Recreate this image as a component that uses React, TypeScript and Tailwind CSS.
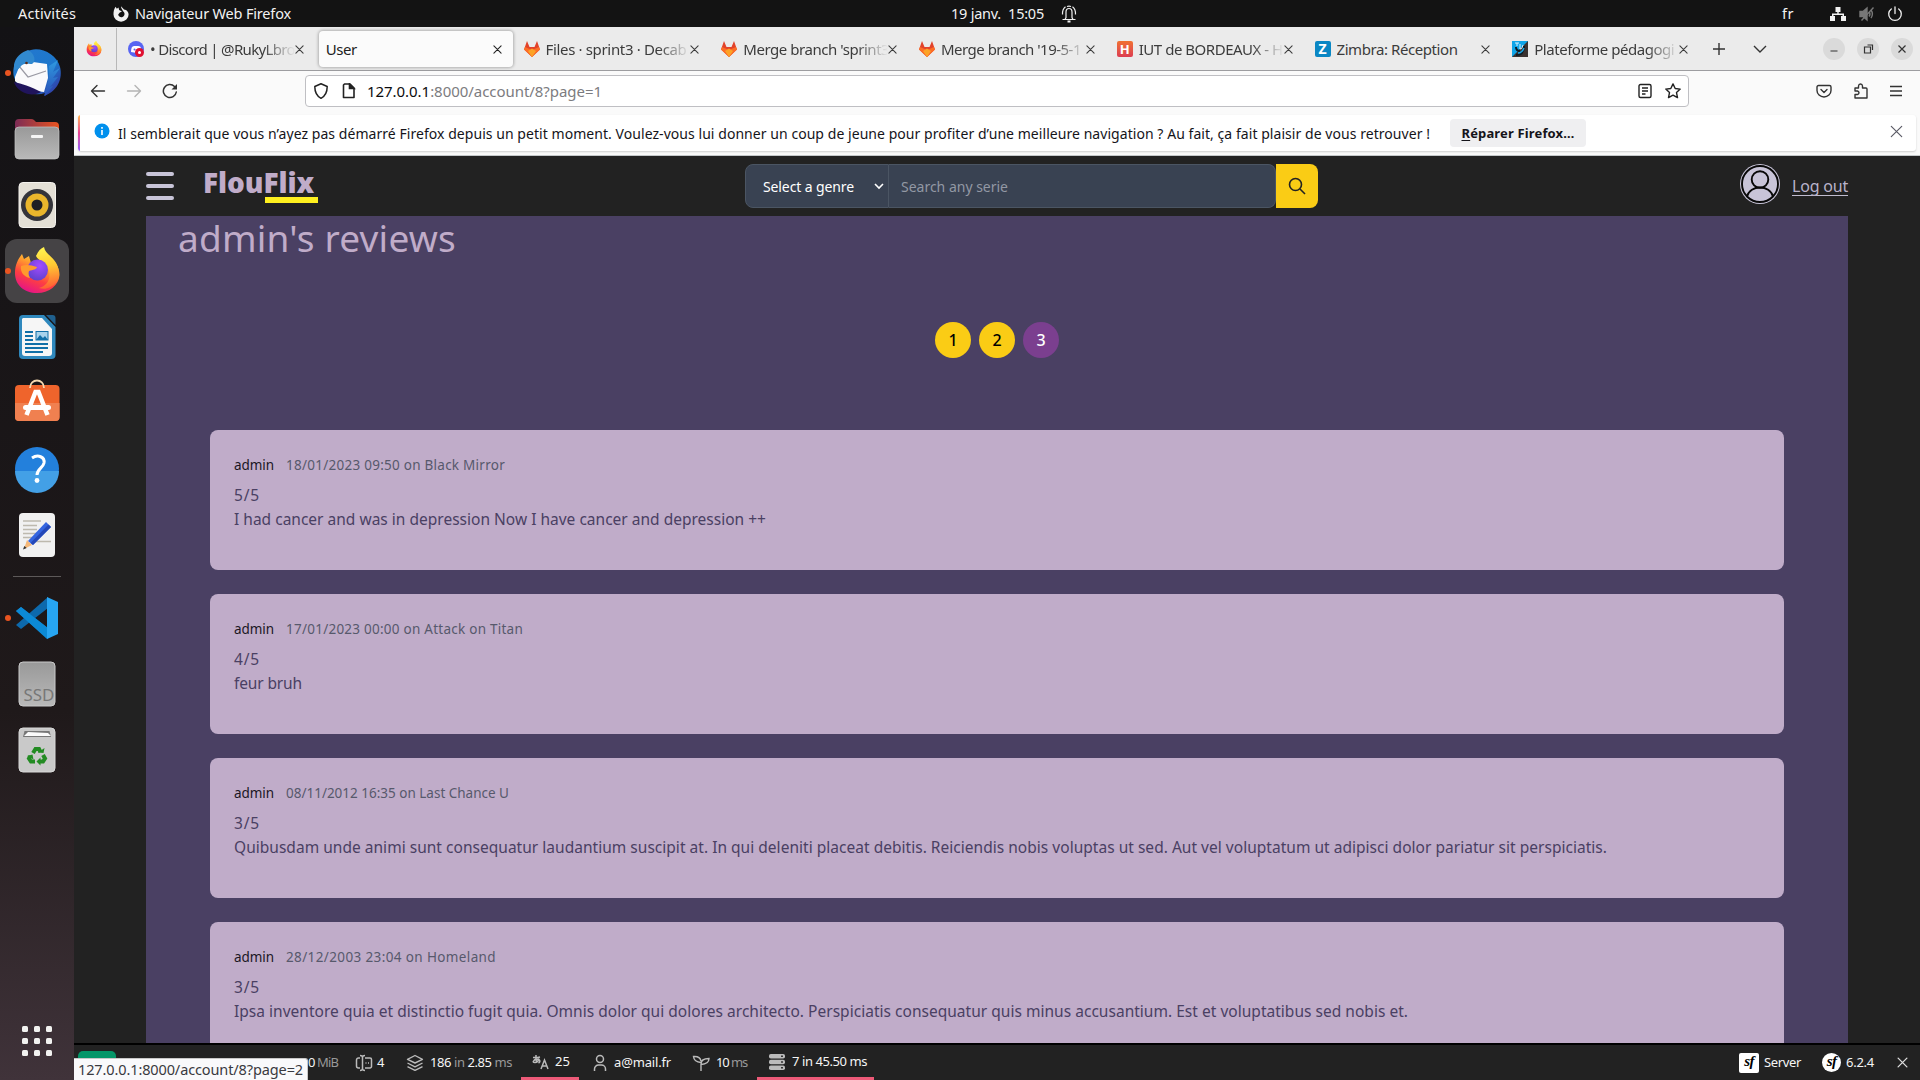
import React, { useLayoutEffect, useRef } from "react";
import type { ReactNode } from "react";

/** One line of text whose tracking is adjusted so that it fills `w` pixels. */
function Fit({ w, className = "", children }: { w: number; className?: string; children: ReactNode }) {
  const ref = useRef<HTMLSpanElement>(null);
  useLayoutEffect(() => {
    const el = ref.current;
    if (!el) return;
    el.style.letterSpacing = "0px";
    const n = (el.textContent || "").length;
    const natural = el.getBoundingClientRect().width;
    el.style.letterSpacing = `${(w - natural) / n}px`;
  }, [w]);
  return (
    <span ref={ref} className={`inline-block shrink-0 whitespace-pre ${className}`}>
      {children}
    </span>
  );
}

function Cross({ className = "size-2.5", width = 1.2 }: { className?: string; width?: number }) {
  return (
    <svg viewBox="0 0 10 10" className={`shrink-0 overflow-visible ${className}`} fill="none" stroke="currentColor" strokeWidth={width} strokeLinecap="round">
      <path d="M1 1l8 8M9 1L1 9" />
    </svg>
  );
}

function TopBar() {
  return (
    <div className="grid h-[27px] shrink-0 grid-cols-[951px_1fr_auto] items-center bg-[#131313] text-[14.5px] leading-none text-[#f2f2f2]">
      <div className="flex items-center pl-[18px]">
        <Fit w={58}>Activités</Fit>
        <svg viewBox="0 0 16 17" className="ml-[37px] mr-[6px] h-[17px] w-4">
          <path d="M8 1.2l3 3.2C13.800 4.600 15.600 7 15.600 9.500A7.500 7.200 0 0 1 .5 9.500C.5 6.500 1 4 2.600 1.800l1.200 2L5.500 2.500l.6 2.400L9 6.400 6.800 7.500 5.200 9.500 C5.600 12 8 12.700 9.500 12 12.300 10.500 12 7.500 10 6.200 9.500 4.500 8 3.500 8 1.200z" fill="#f2f2f2" />
        </svg>
        <Fit w={156}>Navigateur Web Firefox</Fit>
      </div>
      <div className="flex items-center">
        <Fit w={93}>19 janv.  15:05</Fit>
        <svg viewBox="0 0 16 18" className="ml-[17px] h-[18px] w-4" fill="none" stroke="#f2f2f2" strokeWidth="1.2">
          <path d="M1.500 14.500h13M4 14.500l1-2V7a3 3.500 0 0 1 6 0v5.500l1 2M1.500 9.500Q1.300 4 4.500 1.800M14.500 9.500Q14.700 4 11.500 1.800" />
          <path d="M6.500 16.500h3" strokeWidth="2" />
          <path d="M6 1.500q2-.8 4 0" />
        </svg>
      </div>
      <div className="flex items-center pr-[17px]">
        <Fit w={12}>fr</Fit>
        <svg viewBox="0 0 16 14" className="ml-[36px] h-[14px] w-4" fill="#f2f2f2">
          <path d="M5.500 0h5v5H8.700v1.500H14V9h2v5h-5V9h1.500V8h-9v1H5v5H0V9h2V6.500h5.300V5H5.500z" />
        </svg>
        <svg viewBox="0 0 16 16" className="ml-[13px] size-4" fill="none" stroke="#777" strokeWidth="1.4">
          <path d="M1 5.500h3l4-3.500v12l-4-3.500H1z" fill="#777" />
          <path d="M10 5.500a4 4 0 0 1 0 5M12 4a7 7 0 0 1 0 8M14.500 1.500l-12 13" />
        </svg>
        <svg viewBox="0 0 16 16" className="ml-[12px] size-4" fill="none" stroke="#f2f2f2" strokeWidth="1.3" strokeLinecap="round">
          <path d="M4.300 3A6.300 6.300 0 1 0 11.700 3M8 1v6.500" />
        </svg>
      </div>
    </div>
  );
}

function FirefoxArt() {
  return (
    <>
      <defs>
        <linearGradient id="fxBody" x1="0.8" y1="0" x2="0.3" y2="1">
          <stop offset="0" stopColor="#fff44f" />
          <stop offset="0.35" stopColor="#ffa02e" />
          <stop offset="0.65" stopColor="#ff4040" />
          <stop offset="1" stopColor="#e3128a" />
        </linearGradient>
        <radialGradient id="fxCore" cx="0.6" cy="0.3" r="0.8">
          <stop offset="0" stopColor="#a34bff" />
          <stop offset="1" stopColor="#5940c8" />
        </radialGradient>
        <linearGradient id="fxTail" x1="0.5" y1="0" x2="0.6" y2="1">
          <stop offset="0" stopColor="#fff44f" />
          <stop offset="0.45" stopColor="#ffc933" />
          <stop offset="1" stopColor="#ff5a34" />
        </linearGradient>
      </defs>
      <path d="M10 34C10 26 13 20 17 15l2 5 5-3 2 7 8 0c4-4 9-6 14-3 4 4 6.500 9 6.500 15A22 19 0 0 1 32 54 C19 54 10 46 10 34z" fill="url(#fxBody)" />
      <path d="M31 17C33 12 36 9 39 8c1 6 6 8 10 13 6 7 6 16 2 22-4 6-11 8-17 6 8-2 12-9 10-17-2-8-11-10-13-15z" fill="url(#fxTail)" />
      <circle cx="32.500" cy="31" r="10.500" fill="url(#fxCore)" />
      <path d="M16 27c5-2 10-1 16 1 0 2-4 3-8 4-1 3 0 5 1 7-6-1-10-6-9-12z" fill="#ff9a2e" />
    </>
  );
}

function DockIcon({ children, running = false, active = false, className = "" }: { children: ReactNode; running?: boolean; active?: boolean; className?: string }) {
  return (
    <div className={`relative ml-[5px] size-16 shrink-0 rounded-[12px] ${active ? "bg-[#454345]" : ""} ${className}`}>
      <svg viewBox="0 0 64 64" className="size-16">{children}</svg>
      {running && <i className="absolute top-[29px] left-0 size-1.5 rounded-full bg-[#e95420]" />}
    </div>
  );
}

function Dock() {
  return (
    <div className="flex w-[74px] shrink-0 flex-col bg-linear-to-b from-[#131215] via-[#1f191a] via-65% to-[#40333a] pt-[14px]">
      <div className="flex flex-col gap-0.5">
        <DockIcon running>
          <defs>
            <linearGradient id="tb" x1="0" y1="0" x2="1" y2="1"><stop offset="0" stopColor="#2478cf" /><stop offset="0.6" stopColor="#1d77cc" /><stop offset="1" stopColor="#3a2a9b" /></linearGradient>
            <linearGradient id="tbWing" x1="0" y1="0" x2="0" y2="1"><stop offset="0" stopColor="#2f9be0" /><stop offset="1" stopColor="#2a4fb8" /></linearGradient>
          </defs>
          <path d="M9 36C6 22 15 11 26 9c11-3 26 5 29 17 3 11-2 24-16 29l1-3c-12 4-27-2-31-16z" fill="url(#tb)" />
          <path d="M10 36l5-12 13-3 14 2 1 14-4 14C28 50 14 45 10 40z" fill="#fafafc" />
          <path d="M14 25l9 11 18-6" fill="none" stroke="#9a9aa4" strokeWidth="1.200" />
          <path d="M9 41c8 2 16 4 27 10-3 2-8 3-13 2-7-2-12-6-14-12z" fill="#20145c" />
          <path d="M9 24c1-8 8-13 14-15 6 3 9 11 4 14-5 0-7-2-11 2-2 3-4 4-7 4z" fill="#3189cf" />
          <path d="M44 25l9-6-5 12 7-4-7 10 5-1-8 10 3-1-8 10c-1-6 5-12 4-30z" fill="url(#tbWing)" />
          <circle cx="21.500" cy="22" r="1.300" fill="#5b2b18" />
        </DockIcon>
        <DockIcon>
          <defs>
            <linearGradient id="fo" x1="0" y1="0" x2="1" y2="0"><stop offset="0" stopColor="#7c2b55" /><stop offset="1" stopColor="#e95420" /></linearGradient>
            <linearGradient id="gr" x1="0" y1="0" x2="0" y2="1"><stop offset="0" stopColor="#999" /><stop offset="1" stopColor="#b9b9b9" /></linearGradient>
          </defs>
          <path d="M10 26V16a4 4 0 0 1 4-4h12q2 0 3 1l2 2h19a4 4 0 0 1 4 4v10z" fill="url(#fo)" />
          <rect x="10" y="20" width="44" height="32" rx="4" fill="url(#gr)" stroke="#c5c5c5" strokeWidth="0.700" />
          <rect x="26" y="28" width="12" height="3" rx="1" fill="#f5f5f5" />
        </DockIcon>
        <DockIcon>
          <rect x="14" y="9.500" width="36.500" height="45" rx="4" fill="#e4e0d6" stroke="#f4f2ee" />
          <circle cx="32" cy="32" r="16" fill="#34343a" />
          <circle cx="32" cy="32" r="11.500" fill="#eab62c" />
          <circle cx="32" cy="32" r="5.500" fill="#202024" />
        </DockIcon>
        <DockIcon running active><FirefoxArt /></DockIcon>
        <DockIcon>
          <path d="M18 10h21l11.500 12v28a4 4 0 0 1-4 4H18a4 4 0 0 1-4-4V14a4 4 0 0 1 4-4z" fill="#2f88bd" />
          <path d="M18 13h19l10 11v24a3 3 0 0 1-3 3H20a3 3 0 0 1-3-3V14z" fill="#f6f6f6" />
          <path d="M41 10h6.500a3 3 0 0 1 3 3v7z" fill="#20608e" />
          <path d="M20 27h8M20 31h8M20 35h8M20 39h23M20 43h23M20 47h18" stroke="#1170a8" strokeWidth="2" />
          <rect x="31" y="26.500" width="12" height="8.500" fill="#a8d3ec" stroke="#1170a8" />
          <path d="M31 35l4-5 3 3 2-2 3 4z" fill="#1170a8" />
        </DockIcon>
        <DockIcon>
          <rect x="10" y="14" width="44.500" height="36" rx="4" fill="#ef642c" />
          <path d="M10 32h44.500v14a4 4 0 0 1-4 4h-36.500a4 4 0 0 1-4-4z" fill="#f08050" />
          <path d="M25 17c0-10 14-10 14 0" fill="none" stroke="#f4d8b0" strokeWidth="1.800" />
          <path d="M21.500 44l9-23h3l9 23" fill="none" stroke="#fff" strokeWidth="4.500" />
          <rect x="18" y="34" width="28" height="5" rx="2.500" fill="#fff" />
        </DockIcon>
        <DockIcon>
          <circle cx="32" cy="32" r="22" fill="#2380dc" />
          <path d="M10 34a22 22 0 0 0 44 0z" fill="#43a0e6" />
          <path d="M27 21c6-4 13-1 12 5-1 5-7 6-7 12" fill="none" stroke="#fff" strokeWidth="3" />
          <circle cx="32" cy="43.500" r="2.400" fill="#fff" />
        </DockIcon>
        <DockIcon>
          <rect x="14" y="10" width="36" height="44" rx="4" fill="#f1f1f1" />
          <path d="M18 18h18M18 22.500h14M18 26.500h14M18 30.500h14M18 34.500h12M26 38.500h20" stroke="#bdb9ae" strokeWidth="1.600" />
          <path d="M19 46l3-9 5 5z" fill="#f5b878" /><path d="M18 46.500l1.300-3.500 2.400 2z" fill="#333" />
          <path d="M23 38l18-19 5 5-18 18z" fill="#3465e0" />
          <path d="M25.500 40l18-18.500 2.500 2.500-18 18z" fill="#2448b8" />
        </DockIcon>
      </div>
      <div className="my-[9px] ml-[13px] h-px w-12 bg-[#5d5959]" />
      <div className="flex flex-col gap-0.5">
        <DockIcon running>
          <path d="M11 25l5-4 27 21v11z" fill="#1176bd" />
          <path d="M11 39l5 4 27-21V11z" fill="#0d69ac" />
          <path d="M11 25l5-4 28 22-2 10z" fill="#0c8ad6" />
          <path d="M42 11l11 5v32l-11 5z" fill="#27a5f2" />
        </DockIcon>
        <DockIcon>
          <rect x="14" y="10" width="36" height="44" rx="4" fill="url(#gr)" stroke="#c9c9c9" />
          <text x="18.500" y="48.500" fontSize="15.500" textLength="31" lengthAdjust="spacingAndGlyphs" fill="#777" className="font-['Noto_Sans',sans-serif]">SSD</text>
        </DockIcon>
        <DockIcon>
          <rect x="14" y="10" width="36" height="44" rx="4" fill="#c9c9c9" stroke="#d8d8d8" />
          <path d="M18 19l1.500-6h25l1.500 6z" fill="#777" />
          <path d="M19 18l4-4 20 1 3 3z" fill="#fafafa" />
          <g fill="none" stroke="#228b22" strokeWidth="4">
            <path d="M28 35l2.500-4h3.500l1.500 3M38 37l2 3.500-2 3h-3M30 43.500h-4l-2-3 1.500-2.500" />
          </g>
          <path d="M33 34.500l5.500.5 1-5zM35.500 39.500v8l-4-4zM22 38l5.500-1.500 1 5z" fill="#228b22" />
        </DockIcon>
      </div>
      <DockIcon className="mt-auto mb-[7px]">
        {[17, 29, 41].map((y) => [17, 29, 41].map((x) => <rect key={`${x}-${y}`} x={x} y={y} width="6" height="6" rx="1.500" fill="#f2f2f0" />))}
      </DockIcon>
    </div>
  );
}

function GitlabIcon() {
  return (
    <svg viewBox="0 0 16 16" className="size-4">
      <path d="M3 0l2.500 6h5L13 0l3 8.500L8 16 0 8.500z" fill="#e2432a" />
      <path d="M0 8.500L1 6l7 3 7-3 1 2.500L8 16z" fill="#fc6d26" />
      <path d="M4 10l4-2.500L12 10l-4 6z" fill="#fca326" />
    </svg>
  );
}

const favicons: Record<string, ReactNode> = {
  discord: (
    <svg viewBox="0 0 16 16" className="size-4">
      <circle cx="8" cy="8" r="8" fill="#5865f2" />
      <path d="M3 11c0-4 1-6 3-6h4c2 0 3 1 3 3l-2 1H9v3z" fill="#fff" />
      <circle cx="6.500" cy="8.500" r="1" fill="#5865f2" />
      <circle cx="11.500" cy="11.500" r="4.500" fill="#e01030" />
      <circle cx="11.500" cy="11.500" r="1.500" fill="#fff" />
    </svg>
  ),
  gitlab: <GitlabIcon />,
  hp: <span className="flex size-4 items-center justify-center rounded-[2px] bg-linear-to-b from-[#f07030] to-[#dc3c50] text-[13px] leading-none font-bold text-white">H</span>,
  zimbra: <span className="flex size-4 items-center justify-center rounded-[2px] bg-[#0a87c4] text-[14px] leading-none font-bold text-white">Z</span>,
  moodle: (
    <svg viewBox="0 0 16 16" className="size-4">
      <path d="M0 0h16v16H0z" fill="#10a5e8" /><path d="M16 0v16H0z" fill="#3b3230" />
      <path d="M4 6q0 4 4 4M4 14q8 0 8-9" fill="none" stroke="#0d1c26" strokeWidth="2" />
      <path d="M3 2h4M5 2v3M8 3v5q2 1 3-4" fill="none" stroke="#d9f2ff" strokeWidth="1" />
      <path d="M6 12q4 0 6-5" fill="none" stroke="#18a9ea" strokeWidth="1.500" />
    </svg>
  ),
};

const tabs = [
  { icon: "discord", text: "• Discord | @RukyLbro", w: 145 },
  { icon: "", text: "User", w: 31 },
  { icon: "gitlab", text: "Files · sprint3 · Decab", w: 141 },
  { icon: "gitlab", text: "Merge branch 'sprint3", w: 146 },
  { icon: "gitlab", text: "Merge branch '19-5-1", w: 140 },
  { icon: "hp", text: "IUT de BORDEAUX - H", w: 144 },
  { icon: "zimbra", text: "Zimbra: Réception", w: 121 },
  { icon: "moodle", text: "Plateforme pédagogi", w: 140 },
];

function TabBar() {
  return (
    <div className="flex h-[44px] shrink-0 items-center border-b border-[#9d9da0] bg-[#ebebeb] pt-px text-[15px] text-[#3c3c3c]">
      <div className="flex h-full w-[43px] items-center border-r border-[#b8b8b8] pl-3">
        <svg viewBox="8 8 48 48" className="size-4"><FirefoxArt /></svg>
      </div>
      <div className="flex w-[1585px] pl-[3px]">
        {tabs.map((t) => {
          const selected = !t.icon;
          const long = t.w > 130;
          return (
            <div
              key={t.text}
              className={`flex h-9 w-[197.75px] shrink-0 items-center pr-[14px] ${selected ? "pl-px" : "pl-[8px]"}`}
            >
              <div className={`flex h-9 items-center ${selected ? "-mr-2.5 w-[194px] shrink-0 rounded-[4px] bg-[#fbfbfb] pr-[11px] pl-[7px] text-[#222] shadow-[0_0_3px_1px_rgba(0,0,0,0.25)]" : "w-full"}`}>
                {t.icon && <span className="mr-1.5 flex size-4 shrink-0">{favicons[t.icon]}</span>}
                <span className={`min-w-0 flex-1 overflow-hidden leading-6 whitespace-nowrap ${long ? "[mask-image:linear-gradient(to_right,black_78%,transparent_100%)]" : ""}`}>
                  <Fit w={t.w}>{t.text}</Fit>
                </span>
                <Cross className="size-[9px]" />
              </div>
            </div>
          );
        })}
      </div>
      <svg viewBox="0 0 12 12" className="ml-[11px] size-3" stroke="#333" strokeWidth="1.400"><path d="M0 6h12M6 0v12" /></svg>
      <svg viewBox="0 0 14 8" className="ml-[28px] h-2 w-[14px]" fill="none" stroke="#333" strokeWidth="1.400"><path d="M1 1l6 6 6-6" /></svg>
      <div className="ml-auto flex gap-3 pr-[7px]">
        {["M7.500 13h7", "M7.500 9h6v6h-6zM10.500 7h5v5", "M7.500 7.500l7 7M14.500 7.500l-7 7"].map((d) => (
          <svg key={d} viewBox="0 0 22 22" className="size-[22px] rounded-full bg-[#dadada]" fill="none" stroke="#333" strokeWidth="1.200"><path d={d} /></svg>
        ))}
      </div>
    </div>
  );
}

function NavBar() {
  return (
    <div className="flex h-[44px] shrink-0 items-center bg-[#fafafa] pb-1 text-[#222]">
      <div className="flex w-[231px] items-center gap-5 pl-4">
        <svg viewBox="0 0 16 16" className="size-4" fill="none" stroke="#333" strokeWidth="1.400" strokeLinecap="round" strokeLinejoin="round"><path d="M14.500 8H1.500M7 2.500l-5.500 5.500 5.500 5.500" /></svg>
        <svg viewBox="0 0 16 16" className="size-4" fill="none" stroke="#b4b4b4" strokeWidth="1.400" strokeLinecap="round" strokeLinejoin="round"><path d="M1.500 8h13M9 2.500l5.500 5.500-5.500 5.500" /></svg>
        <svg viewBox="0 0 16 16" className="size-4" fill="none" stroke="#333" strokeWidth="1.500" strokeLinecap="round"><path d="M14.300 9A6.500 6.500 0 1 1 12.500 3.500" /><path d="M15 1v5.500H9.500z" fill="#333" stroke="none" /></svg>
      </div>
      <div className="flex h-8 w-[1384px] items-center rounded-[4px] border border-[#bfbfc3] bg-white pr-[7px] pl-[7px]">
        <svg viewBox="0 0 16 16" className="size-4" fill="none" stroke="#222" strokeWidth="1.500"><path d="M8 .8l6.200 2.700C14.200 9 12.500 13 8 15.300 3.500 13 1.800 9 1.800 3.500z" strokeLinejoin="round" /></svg>
        <svg viewBox="0 0 16 16" className="ml-3 size-4" fill="none" stroke="#222" strokeWidth="1.600"><path d="M3.500 1h5.500l4 4v9.500H2.500V2z" strokeLinejoin="round" /><path d="M8.500 1v4.500H13z" fill="#222" /></svg>
        <Fit w={235} className="ml-[10px] text-[15px] leading-6 text-[#7c7c80]"><span className="text-[#0c0c0d]">127.0.0.1</span>:8000/account/8?page=1</Fit>
        <svg viewBox="0 0 16 16" className="ml-auto size-4" fill="none" stroke="#222" strokeWidth="1.400"><rect x="2" y="1.500" width="12" height="13" rx="1.500" /><path d="M5 5h6M5 8h6M5 11h3.500" /></svg>
        <svg viewBox="0 0 16 16" className="ml-3 size-4" fill="none" stroke="#222" strokeWidth="1.400" strokeLinejoin="round"><path d="M8 .9l2.200 4.600 5 .6-3.700 3.500 1 5L8 12.100l-4.500 2.500 1-5L.8 6.100l5-.6z" /></svg>
      </div>
      <div className="ml-auto flex items-center gap-5 pr-4">
        <svg viewBox="0 0 16 16" className="size-4" fill="none" stroke="#333" strokeWidth="1.400" strokeLinecap="round" strokeLinejoin="round"><path d="M2.500 2.500h11a1.500 1.500 0 0 1 1.500 1.500v3.500a7 6.500 0 0 1-14 0V4a1.500 1.500 0 0 1 1.500-1.500z" /><path d="M5 6.500l3 3 3-3" /></svg>
        <svg viewBox="0 0 16 16" className="size-4" fill="none" stroke="#333" strokeWidth="1.400" strokeLinejoin="round"><path d="M3 15V11.500h2.500q1.500-.3 1.500-1.700T5.500 8H3V5h3.500V3Q6.700 1 8.500 1T10.500 3v2H14a1 1 0 0 1 1 1V15z" /></svg>
        <svg viewBox="0 0 16 16" className="size-4" stroke="#333" strokeWidth="1.400"><path d="M2 3.500h12M2 8h12M2 12.500h12" /></svg>
      </div>
    </div>
  );
}

function Notification() {
  return (
    <div className="h-[41px] shrink-0 border-b border-[#c4c8ca] bg-[#fafafa] pr-1 pl-1">
      <div className="flex h-9 items-center overflow-hidden rounded-[3px] bg-white pr-[13px] shadow-[0_1px_2px_rgba(0,0,0,0.18)]">
        <div className="h-full w-0.5 bg-linear-to-b from-[#ffb347] via-[#e84090] to-[#9059ff]" />
        <svg viewBox="0 0 16 16" className="mb-1 ml-[14px] size-4"><circle cx="8" cy="8" r="7.500" fill="#0090ed" /><path d="M8 7v5M8 4v1.700" stroke="#fff" strokeWidth="1.600" /></svg>
        <Fit w={1312} className="ml-[8px] text-[14px] text-[#15141a]">Il semblerait que vous n’ayez pas démarré Firefox depuis un petit moment. Voulez-vous lui donner un coup de jeune pour profiter d’une meilleure navigation ? Au fait, ça fait plaisir de vous retrouver !</Fit>
        <div className="ml-[20px] flex h-7 w-[136px] items-center justify-center rounded-[4px] bg-[#efeff1] pt-px text-[13px] font-bold text-[#15141a]">
          <Fit w={113}><u className="underline-offset-2">R</u>éparer Firefox…</Fit>
        </div>
        <Cross className="mb-1 ml-auto size-[13px] text-[#5b5b66]" width={0.9} />
      </div>
    </div>
  );
}

function SiteHeader() {
  return (
    <div className="flex h-[60px] shrink-0 items-center bg-[#222] pr-[72px] pl-[72px]">
      <div className="flex w-7 flex-col gap-2">
        {[0, 1, 2].map((i) => <i key={i} className="h-1 rounded-[2px] bg-[#c8c4d8]" />)}
      </div>
      <div className="ml-[29px] flex w-[115px] flex-col pb-[3px]">
        <Fit w={111} className="self-start font-['Noto_Sans',sans-serif] text-[28px] leading-[32px] font-black text-[#c0acc9]">FlouFlix</Fit>
        <i className="-mt-px h-[6px] w-[53px] self-end bg-[#fff01f]" />
      </div>
      <div className="ml-[427px] flex h-11 items-stretch text-[14px]">
        <div className="flex w-[144px] items-center justify-between rounded-l-[8px] border border-[#4b5563] bg-[#394252] pr-[4px] pl-[17px] text-white">
          <Fit w={91}>Select a genre</Fit>
          <svg viewBox="0 0 10 7" className="h-[7px] w-2.5" fill="none" stroke="#fff" strokeWidth="1.600"><path d="M1 1l4 4 4-4" /></svg>
        </div>
        <div className="flex w-[387px] items-center rounded-r-[8px] border border-l-0 border-[#4b5563] bg-[#394252] pl-[12px] text-[#9298a4]">
          <Fit w={107}>Search any serie</Fit>
        </div>
        <div className="flex w-[42px] items-center justify-center rounded-r-[8px] bg-[#facc15]">
          <svg viewBox="0 0 20 20" className="size-5" fill="none" stroke="#222" strokeWidth="1.600"><circle cx="8.500" cy="8.500" r="6" /><path d="M13 13l5 5" /></svg>
        </div>
      </div>
      <svg viewBox="0 0 40 40" className="mb-1 ml-auto size-10">
        <circle cx="20" cy="20" r="20" fill="#c8c4d8" />
        <g fill="none" stroke="#080808" strokeWidth="1.900"><circle cx="20" cy="20" r="18" /><circle cx="20" cy="15.500" r="8.300" /><path d="M7 32.500C10 20.500 30 20.500 33 32.500" /></g>
      </svg>
      <div className="mt-0.5 ml-3 w-[56px] border-b border-[#c0bccf] text-[16px] leading-[17px] text-[#b9b3cb]"><Fit w={56}>Log out</Fit></div>
    </div>
  );
}

const reviews = [
  { meta: "18/01/2023 09:50 on Black Mirror", mw: 219, note: "5/5", text: "I had cancer and was in depression Now I have cancer and depression ++", w: 532 },
  { meta: "17/01/2023 00:00 on Attack on Titan", mw: 237, note: "4/5", text: "feur bruh", w: 68 },
  { meta: "08/11/2012 16:35 on Last Chance U", mw: 223, note: "3/5", text: "Quibusdam unde animi sunt consequatur laudantium suscipit at. In qui deleniti placeat debitis. Reiciendis nobis voluptas ut sed. Aut vel voluptatum ut adipisci dolor pariatur sit perspiciatis.", w: 1373 },
  { meta: "28/12/2003 23:04 on Homeland", mw: 210, note: "3/5", text: "Ipsa inventore quia et distinctio fugit quia. Omnis dolor qui dolores architecto. Perspiciatis consequatur quis minus accusantium. Est et voluptatibus sed nobis et.", w: 1174 },
];

function Reviews() {
  return (
    <div className="mx-[72px] min-h-0 flex-1 overflow-hidden bg-[#4a4063]">
      <h1 className="h-[106px] pl-[32px] text-[37px] leading-[44px] text-[#c0acc9]"><Fit w={278}>admin's reviews</Fit></h1>
      <div className="flex justify-center gap-2 text-[16px] font-medium">
        {[1, 2, 3].map((n) => (
          <span key={n} className={`flex size-9 items-center justify-center rounded-full ${n === 3 ? "bg-[#7b3f8f] text-white" : "bg-[#facc15] text-black"}`}>{n}</span>
        ))}
      </div>
      <div className="mt-[72px] flex flex-col gap-6 px-16">
        {reviews.map((r) => (
          <div key={r.meta} className="h-[140px] rounded-[8px] bg-[#c0acc9] p-6 text-[15.500px] leading-6 text-[#4a4063]">
            <div className="mb-2 flex h-[21px] items-center gap-3 text-[13.500px]">
              <Fit w={40} className="text-[#1b1724]">admin</Fit>
              <Fit w={r.mw} className="text-[#57596c]">{r.meta}</Fit>
            </div>
            <div><Fit w={26}>{r.note}</Fit></div>
            <div><Fit w={r.w}>{r.text}</Fit></div>
          </div>
        ))}
      </div>
    </div>
  );
}

function Sf({ className }: { className: string }) {
  return <span className={`flex items-center justify-center bg-white pb-0.5 font-['Liberation_Serif',serif] text-[15px] leading-none font-bold tracking-tighter text-black italic ${className}`}>sf</span>;
}

function Toolbar() {
  const ic = "size-[18px] shrink-0";
  const dim = "text-[#999]";
  return (
    <div className="relative flex h-[37px] shrink-0 items-center border-t-2 border-black bg-[#222] text-[13px] leading-none text-[#f5f5f5]">
      <div className="mt-[6px] ml-1 h-[29px] w-[38px] self-start rounded-t-[5px] bg-[#059669]" />
      <div className="ml-[192px] flex w-[47px] items-center"><Fit w={30}>0<span className={dim}> MiB</span></Fit></div>
      <svg viewBox="0 0 18 18" className={ic} fill="none" stroke="#bbb" strokeWidth="1.500"><path d="M5 4H3.500A2 2 0 0 0 1.500 6v6a2 2 0 0 0 2 2H5M10 4h5a1.500 1.500 0 0 1 1.500 1.500v7A1.500 1.500 0 0 1 15 14h-5M5 1.500q2.500 0 2.500 2v11q0 2-2.500 2M10 1.500q-2.500 0-2.500 2M10 16.500q-2.500 0-2.500-2M10.500 9h1M13 9h1" /></svg>
      <div className="ml-[4px] w-[29px]">4</div>
      <svg viewBox="0 0 18 18" className={ic} fill="none" stroke="#bbb" strokeWidth="1.400" strokeLinejoin="round"><path d="M9 1.500l7.500 3.800L9 9 1.500 5.300zM1.500 9L9 12.800 16.500 9M1.500 12.600L9 16.400l7.500-3.800" /></svg>
      <Fit w={82} className="ml-1.5">186<span className={dim}> in</span> 2.85 <span className={dim}>ms</span></Fit>
      <div className="mt-auto ml-[9px] flex h-[34px] w-[58px] items-center border-b-[3px] border-[#ed5a78] pl-[11px]">
        <svg viewBox="0 0 18 18" className={ic} fill="none" stroke="#bbb" strokeWidth="1.500"><path d="M1 4.500q4 .3 7-.5M4 2q-.5 5 .8 7.500M7 5.500Q6 9.500 3 9.500t-1-2Q3.500 5 7 6.500q2 2-.5 3.500" /><path d="M9 16l3.500-9L16 16M10.300 13h4.500" /></svg>
        <Fit w={15} className="ml-[5px]">25</Fit>
      </div>
      <svg viewBox="0 0 18 18" className={`ml-3 ${ic}`} fill="none" stroke="#bbb" strokeWidth="1.500"><circle cx="9" cy="5" r="3.500" /><path d="M3.500 17v-2a4 4 0 0 1 4-4h3a4 4 0 0 1 4 4v2" /></svg>
      <Fit w={57} className="ml-[5px]">a@mail.fr</Fit>
      <svg viewBox="0 0 18 18" className={`ml-[21px] ${ic}`} fill="none" stroke="#bbb" strokeWidth="1.400"><path d="M9 17V10Q9 4.500 17 4.500 17 10 9 10.500M9 8.500Q2 8 1.500 2.500 8 2 9 7" /></svg>
      <Fit w={31} className="ml-[6px]">10<span className={dim}> ms</span></Fit>
      <div className="mt-auto ml-[10px] flex h-[34px] w-[117px] items-center border-b-[3px] border-[#ed5a78] pl-[11px]">
        <svg viewBox="0 0 18 18" className={ic}><g fill="#bbb"><rect x="1" y="1" width="16" height="4.600" rx="1.800" /><rect x="1" y="6.700" width="16" height="4.600" rx="1.800" /><rect x="1" y="12.400" width="16" height="4.600" rx="1.800" /></g><path d="M13 3.300h2M13 9h2M13 14.700h2" stroke="#333" strokeWidth="1.400" /></svg>
        <Fit w={75} className="ml-[6px]">7 in 45.50 ms</Fit>
      </div>
      <Sf className="ml-auto size-5 rounded-[2px]" />
      <Fit w={37} className="ml-[5px]">Server</Fit>
      <Sf className="ml-[21px] size-[19px] rounded-full" />
      <Fit w={28} className="ml-[5px]">6.2.4</Fit>
      <Cross className="mr-[12px] ml-[23px] size-[11px] text-[#ddd]" />
      <div className="absolute bottom-0 left-0 flex h-[22px] w-[234px] items-center rounded-tr-[3px] border-t border-r border-[#c8c8c8] bg-[#f9f9fb] pl-[4px] text-[14.500px] text-[#3a3a40]">
        <Fit w={225}>127.0.0.1:8000/account/8?page=2</Fit>
      </div>
    </div>
  );
}

export default function App() {
  return (
    <div className="flex h-[1080px] w-[1920px] flex-col overflow-hidden bg-[#222] font-['Noto_Sans',sans-serif]">
      <TopBar />
      <div className="flex min-h-0 flex-1">
        <Dock />
        <main className="flex min-w-0 flex-1 flex-col">
          <TabBar />
          <NavBar />
          <Notification />
          <SiteHeader />
          <Reviews />
          <Toolbar />
        </main>
      </div>
    </div>
  );
}
